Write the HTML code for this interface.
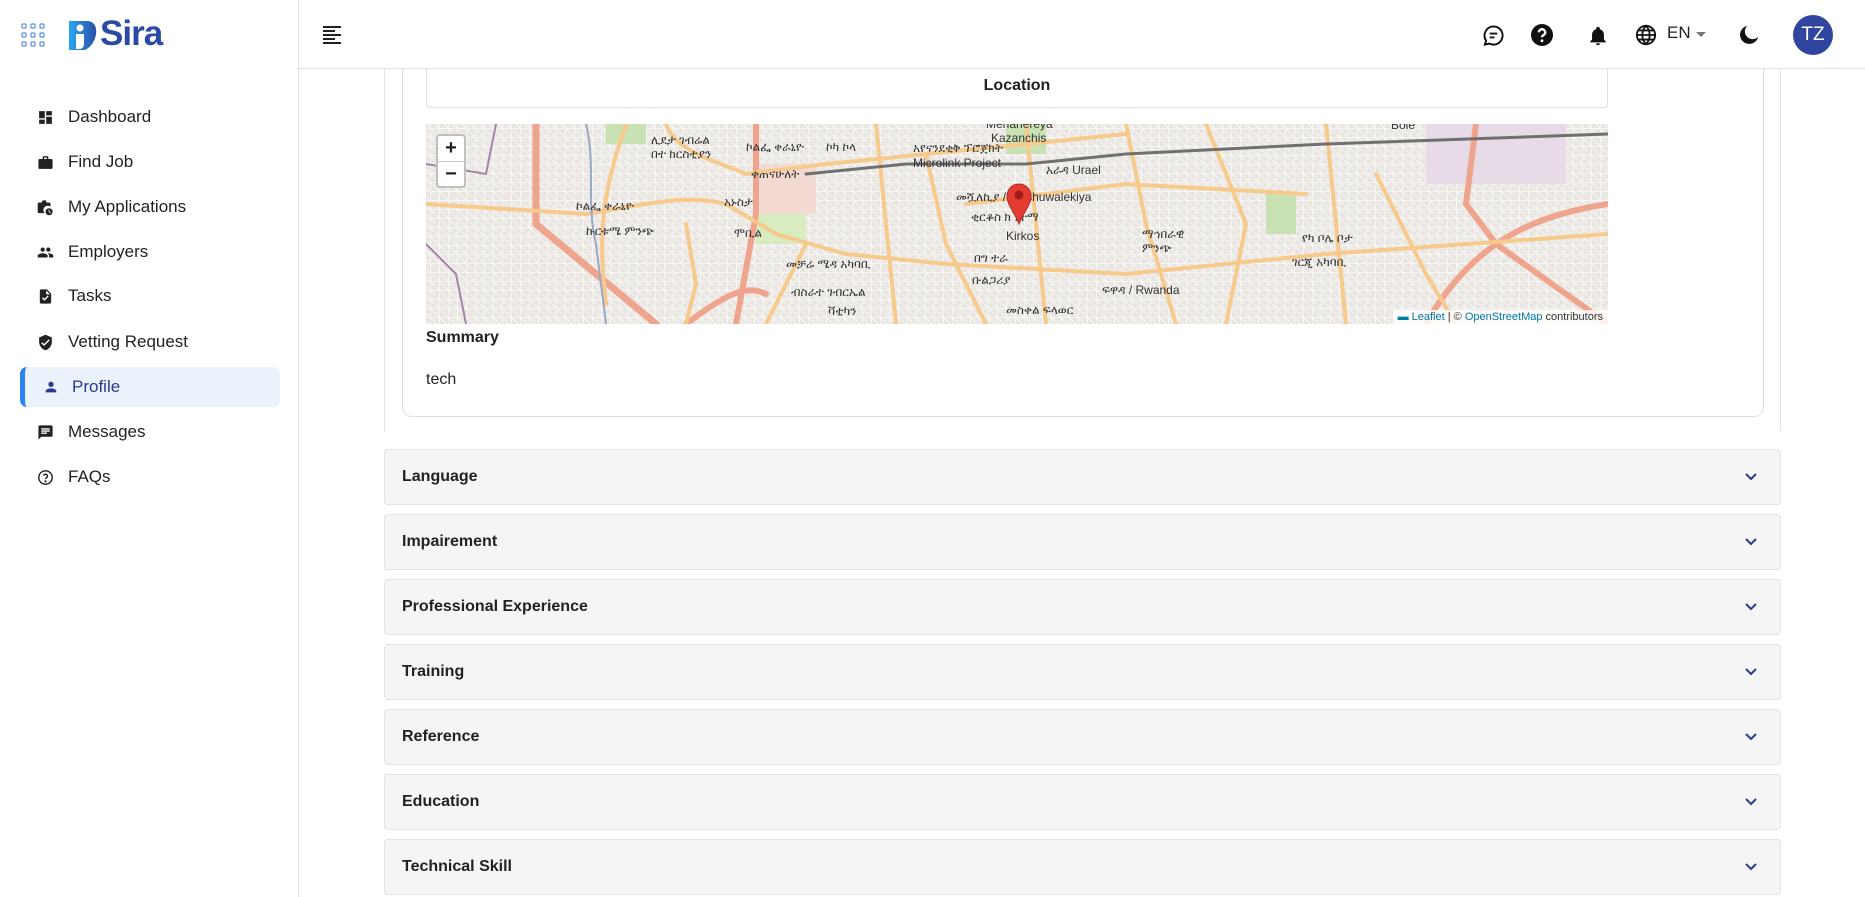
<!DOCTYPE html>
<html><head><meta charset="utf-8">
<style>
*{box-sizing:border-box;margin:0;padding:0}
body{width:1865px;height:897px;overflow:hidden;background:#fff;font-family:"Liberation Sans","Noto Sans CJK SC",sans-serif;color:#222;position:relative}
.side{position:absolute;left:0;top:0;width:299px;height:897px;border-right:1px solid #e0e0e0;background:#fff;z-index:5}
.top{position:absolute;left:299px;top:0;right:0;height:69px;border-bottom:1px solid #e0e0e0;background:#fff;z-index:5}
.item{position:absolute;left:20px;width:260px;height:40px;display:flex;align-items:center;font-size:17px;color:#222}
.item svg{position:absolute;left:17px}
.item span{position:absolute;left:48px}
.item.act{background:#ebf2fc;border-radius:7px;border-left:5px solid #2684f5;color:#2b3a8f}
.item.act svg{left:18px}.item.act span{left:47px}
.acc{position:absolute;left:384px;width:1397px;height:56px;background:#f5f5f5;border:1px solid #e3e3e3;border-radius:4px;font-weight:bold;font-size:16px;display:flex;align-items:center;padding-left:17px}
.acc svg{position:absolute;right:22px;top:22px}
.ic{position:absolute}
</style></head><body>
<div class="side">
  <svg class="ic" style="left:21px;top:23px" width="24" height="24" viewBox="0 0 24 24" fill="none" stroke="#5b8fe0" stroke-width="1.2">
    <rect x="1" y="1" width="4" height="4" rx=".8"/><rect x="10" y="1" width="4" height="4" rx=".8"/><rect x="19" y="1" width="4" height="4" rx=".8"/>
    <rect x="1" y="10" width="4" height="4" rx=".8"/><rect x="10" y="10" width="4" height="4" rx=".8"/><rect x="19" y="10" width="4" height="4" rx=".8"/>
    <rect x="1" y="19" width="4" height="4" rx=".8"/><rect x="10" y="19" width="4" height="4" rx=".8"/><rect x="19" y="19" width="4" height="4" rx=".8"/>
  </svg>
  <svg class="ic" style="left:69px;top:21px" width="28" height="29" viewBox="0 0 28 29">
    <defs><linearGradient id="g" x1="0" x2="1"><stop offset="0" stop-color="#2aa6f0"/><stop offset="1" stop-color="#2a4fa8"/></linearGradient></defs>
    <path d="M0 0H18C25 0 28 6 27 13C26 20 22 26 16 29H0Z" fill="url(#g)"/>
    <circle cx="11" cy="7" r="3.5" fill="#fff"/><path d="M7 13h8v10c0 3-2 5-5 5H7Z" fill="#fff"/>
  </svg>
  <div style="position:absolute;left:100px;top:14px;font-size:35px;font-weight:bold;color:#2b4aa6;letter-spacing:-1px">Sira</div>

  <div class="item" style="top:97px"><svg width="17" height="17" viewBox="0 0 24 24" fill="#222"><path d="M3 13h8V3H3zm0 8h8v-6H3zm10 0h8V11h-8zm0-18v6h8V3z"/></svg><span>Dashboard</span></div>
  <div class="item" style="top:142px"><svg width="17" height="17" viewBox="0 0 24 24" fill="#222"><path d="M10 3h4a2 2 0 0 1 2 2v2h4a2 2 0 0 1 2 2v10a2 2 0 0 1-2 2H4a2 2 0 0 1-2-2V9a2 2 0 0 1 2-2h4V5a2 2 0 0 1 2-2zm0 4h4V5h-4z"/></svg><span>Find Job</span></div>
  <div class="item" style="top:187px"><svg width="17" height="17" viewBox="0 0 24 24" fill="#222"><path d="M9 2h4v3h4a2 2 0 0 1 2 2v4a6 6 0 0 0-8 9H3a2 2 0 0 1-2-2V7a2 2 0 0 1 2-2h4V3zm8 11a5 5 0 1 1 0 10a5 5 0 0 1 0-10zm-.5 2v3.5l2.5 1.5.6-.9-2-1.2V15z"/></svg><span>My Applications</span></div>
  <div class="item" style="top:232px"><svg width="17" height="17" viewBox="0 0 24 24" fill="#222"><path d="M16 11a3 3 0 1 0 0-6 3 3 0 0 0 0 6zm-8 0a3 3 0 1 0 0-6 3 3 0 0 0 0 6zm0 2c-2.3 0-7 1.2-7 3.5V19h14v-2.5C15 14.2 10.3 13 8 13zm8 0c-.3 0-.6 0-1 .1 1.2.8 2 1.9 2 3.4V19h6v-2.5c0-2.3-4.7-3.5-7-3.5z"/></svg><span>Employers</span></div>
  <div class="item" style="top:276px"><svg width="17" height="17" viewBox="0 0 24 24" fill="#222"><path d="M14 2H6a2 2 0 0 0-2 2v16a2 2 0 0 0 2 2h12a2 2 0 0 0 2-2V8zm-3.5 16L7 14.5l1.4-1.4 2.1 2.1 4.6-4.6 1.4 1.4zM13 9V3.5L18.5 9z"/></svg><span>Tasks</span></div>
  <div class="item" style="top:322px"><svg width="17" height="17" viewBox="0 0 24 24" fill="#222"><path d="M12 1 3 5v6c0 5.5 3.8 10.7 9 12 5.2-1.3 9-6.5 9-12V5zm-2 16-4-4 1.4-1.4 2.6 2.6 6.6-6.6L18 9z"/></svg><span>Vetting Request</span></div>
  <div class="item act" style="top:367px"><svg width="16" height="16" viewBox="0 0 24 24" fill="#2b3a8f"><path d="M12 12a4 4 0 1 0 0-8 4 4 0 0 0 0 8zm0 2c-2.7 0-8 1.3-8 4v2h16v-2c0-2.7-5.3-4-8-4z"/></svg><span>Profile</span></div>
  <div class="item" style="top:412px"><svg width="17" height="17" viewBox="0 0 24 24" fill="#222"><path d="M20 2H4a2 2 0 0 0-2 2v18l4-4h14a2 2 0 0 0 2-2V4a2 2 0 0 0-2-2zM6 9h12v2H6zm8 5H6v-2h8zm4-6H6V6h12z"/></svg><span>Messages</span></div>
  <div class="item" style="top:457px"><svg width="17" height="17" viewBox="0 0 24 24" fill="none" stroke="#222" stroke-width="2"><circle cx="12" cy="12" r="9.5"/><path d="M9.2 9.3a2.9 2.9 0 0 1 5.6 1c0 2-2.8 2.3-2.8 4" /><circle cx="12" cy="17.5" r=".6" fill="#222"/></svg><span>FAQs</span></div>
</div>

<div class="top">
  <svg class="ic" style="left:23px;top:25px" width="20" height="20" viewBox="0 0 20 20" fill="#222"><rect x="1" y="1" width="18" height="2"/><rect x="1" y="5" width="12" height="2"/><rect x="1" y="9" width="18" height="2"/><rect x="1" y="13" width="12" height="2"/><rect x="1" y="17" width="18" height="2"/></svg>
  <svg class="ic" style="left:1183px;top:24px" width="23" height="23" viewBox="0 0 24 24" fill="none" stroke="#111" stroke-width="2"><path d="M12 2.5a9.5 9.5 0 0 1 0 19c-1.6 0-3-.4-4.3-1L3 21.5l1.3-4.2A9.5 9.5 0 0 1 12 2.5z"/><path d="M8 10h8M8 14h5"/></svg>
  <svg class="ic" style="left:1231px;top:23px" width="24" height="24" viewBox="0 0 24 24"><circle cx="12" cy="12" r="11" fill="#111"/><path d="M8.8 9.3a3.2 3.2 0 0 1 6.4.3c0 2.4-3.2 2.5-3.2 4.6" stroke="#fff" stroke-width="2.4" fill="none"/><circle cx="12" cy="17.8" r="1.4" fill="#fff"/></svg>
  <svg class="ic" style="left:1288px;top:24px" width="22" height="24" viewBox="0 0 24 24" fill="#111"><path d="M12 22a2.2 2.2 0 0 0 2.2-2h-4.4A2.2 2.2 0 0 0 12 22zm6.5-6V11c0-3.1-1.6-5.6-4.5-6.3V4a2 2 0 0 0-4 0v.7C7.1 5.4 5.5 7.9 5.5 11v5l-2 2v1h17v-1z"/></svg>
  <svg class="ic" style="left:1336px;top:24px" width="22" height="22" viewBox="0 0 24 24" fill="none" stroke="#111" stroke-width="2"><circle cx="12" cy="12" r="10"/><path d="M2 12h20M12 2c-3 3-4 6.5-4 10s1 7 4 10c3-3 4-6.5 4-10s-1-7-4-10zM4 7h16M4 17h16"/></svg>
  <div style="position:absolute;left:1368px;top:23px;font-size:17px;color:#222">EN</div>
  <svg class="ic" style="left:1397px;top:32px" width="10" height="6"><path d="M0 0h10L5 5z" fill="#777"/></svg>
  <svg class="ic" style="left:1439px;top:24px" width="22" height="22" viewBox="0 0 24 24" fill="#111"><path d="M10 2a10 10 0 1 0 12 12A8 8 0 0 1 10 2z"/></svg>
  <div style="position:absolute;left:1494px;top:15px;width:40px;height:40px;border-radius:50%;background:#2f459f;color:#fff;font-size:19px;display:flex;align-items:center;justify-content:center">TZ</div>
</div>

<div style="position:absolute;left:384px;top:69px;width:1397px;height:362px;border-left:1px solid #e3e3e3;border-right:1px solid #e3e3e3"></div>
<div style="position:absolute;left:402px;top:40px;width:1362px;height:377px;border:1px solid #dedede;border-top:none;border-radius:0 0 10px 10px"></div>
<div style="position:absolute;left:426px;top:69px;width:1182px;height:39px;border:1px solid #e0e0e0;border-top:none;border-radius:0 0 4px 4px;text-align:center;font-weight:bold;font-size:16px;line-height:34px">Location</div>

<div style="position:absolute;left:426px;top:124px;width:1182px;height:200px;overflow:hidden;background:#e9e6e2">
<svg width="1182" height="200" viewBox="0 0 1182 200" font-family="Liberation Sans, Noto Sans CJK SC, sans-serif" font-size="12" fill="#333">
  <defs><pattern id="p" width="9" height="9" patternUnits="userSpaceOnUse"><path d="M0 4.5h9M4.5 0v9M0 0l9 9" stroke="#fbfbfb" stroke-width="1" opacity=".8"/></pattern></defs>
  <rect width="1182" height="200" fill="url(#p)"/>
  <rect x="330" y="40" width="60" height="50" fill="#f2d9d2"/>
  <rect x="330" y="90" width="50" height="30" fill="#d8ecc0"/>
  <rect x="180" y="0" width="40" height="20" fill="#c8e2b4"/>
  <rect x="580" y="0" width="40" height="30" fill="#c8e2b4"/>
  <rect x="840" y="70" width="30" height="40" fill="#c8e2b4"/>
  <rect x="1000" y="0" width="140" height="60" fill="#e6dbe6"/>
  <g fill="none" stroke-linecap="round">
  <path d="M110 0V100L230 200" stroke="#efa48e" stroke-width="7"/>
  <path d="M330 0 V90 L310 200" stroke="#efa48e" stroke-width="6"/>
  <path d="M1050 0 L1040 80 L1070 120 L1182 200" stroke="#efa48e" stroke-width="6"/>
  <path d="M1182 80 C1120 90 1050 110 1000 200" stroke="#efa48e" stroke-width="6"/>
  <path d="M260 200 C300 170 320 160 340 170" stroke="#efa48e" stroke-width="6"/>
  <g stroke="#f7c98a" stroke-width="4">
  <path d="M0 80 L160 90 C220 80 260 70 300 80 L350 110 L420 130 L520 140 L700 150 L900 130 L1182 110"/>
  <path d="M200 0 C180 60 170 100 180 180"/>
  <path d="M240 0 C250 30 300 40 320 50 L400 40 L500 30 L600 20 L700 10"/>
  <path d="M450 0 L460 100 L470 200"/>
  <path d="M380 120 L340 200"/>
  <path d="M500 30 L520 120 L560 200"/>
  <path d="M600 0 L620 200"/>
  <path d="M700 0 L720 100 L750 200"/>
  <path d="M780 0 L820 100 L800 200"/>
  <path d="M900 0 L920 200"/>
  <path d="M950 50 L1000 150 L1030 200"/>
  <path d="M260 100 L270 160 L260 200"/>
  <path d="M540 80 L700 60 L880 70"/>
  </g>
  <path d="M380 50 L480 40 L600 40 L700 30 L900 20 L1182 10" stroke="#707070" stroke-width="3"/>
  <path d="M160 0 C170 40 160 80 170 120 L180 200" stroke="#9aa8c8" stroke-width="2"/>
  <path d="M0 40 L60 50 L70 0" stroke="#a484a8" stroke-width="2"/>
  <path d="M0 120 L30 150 L40 200" stroke="#a484a8" stroke-width="2"/>
  </g>
  <text x="225" y="20">ሊደታ ገብሬል</text><text x="225" y="34">በተ ክርስቲያን</text>
  <text x="320" y="27">ኮልፌ ቀራኒዮ</text><text x="400" y="27">ኮካ ኮላ</text>
  <text x="487" y="28">አየናንደቂቅ ፕሮጀክት</text><text x="487" y="43" font-size="12">Microlink Project</text>
  <text x="325" y="54">ቀጠናሁለት</text><text x="150" y="86">ኮልፌ ቀራኒዮ</text>
  <text x="298" y="82">አኑስታ</text><text x="160" y="111">ኩርቱሜ ምንጭ</text>
  <text x="308" y="113">ሞቢል</text><text x="360" y="144">መቻሬ ሜዳ አካባቢ</text>
  <text x="365" y="172">ብስራተ ገብርኤል</text><text x="402" y="191">ቫቲካን</text>
  <text x="548" y="138">በግ ተራ</text><text x="546" y="160">ቡልጋሪያ</text>
  <text x="530" y="77">መሿለኪያ / Meshuwalekiya</text><text x="545" y="97">ቂርቆስ ክ ነተማ</text>
  <text x="580" y="116">Kirkos</text><text x="620" y="50">አራዳ Urael</text>
  <text x="560" y="4">Mehanereya</text><text x="565" y="18">Kazanchis</text>
  <text x="716" y="114">ማኅበራዊ</text><text x="716" y="128">ምንጭ</text>
  <text x="676" y="170">ፍዋዳ / Rwanda</text><text x="580" y="190">መስቀል ፍላወር</text>
  <text x="866" y="142">ገርጂ አካባቢ</text><text x="876" y="118">የካ ቦሌ ቦታ</text>
  <text x="965" y="5">Bole</text>
</svg>
  <div style="position:absolute;left:10px;top:10px;width:30px;height:54px;background:#fff;border:2px solid rgba(0,0,0,.25);border-radius:4px;font-weight:bold;font-size:20px;text-align:center;line-height:25px">+<div style="border-top:1px solid #ccc">−</div></div>
  <svg style="position:absolute;left:580px;top:59px" width="26" height="42" viewBox="0 0 26 42"><path d="M13 41C9 30 1 22 1 13a12 12 0 0 1 24 0c0 9-8 17-12 28z" fill="#e33d33" stroke="#b52a22"/><circle cx="13" cy="12" r="4.5" fill="#a11d16"/></svg>
  <div style="position:absolute;right:0;bottom:0;background:rgba(255,255,255,.8);font-size:11px;padding:1px 5px;color:#333"><span style="color:#0078a8">▬ Leaflet</span> | © <span style="color:#0078a8">OpenStreetMap</span> contributors</div>
</div>

<div style="position:absolute;left:426px;top:329px;font-weight:bold;font-size:16px">Summary</div>
<div style="position:absolute;left:426px;top:371px;font-size:16px">tech</div>

<div class="acc" style="top:449px">Language<svg width="14" height="9" viewBox="0 0 14 9"><path d="M2 2l5 5 5-5" stroke="#2b3a8f" stroke-width="2" fill="none"/></svg></div>
<div class="acc" style="top:514px">Impairement<svg width="14" height="9" viewBox="0 0 14 9"><path d="M2 2l5 5 5-5" stroke="#2b3a8f" stroke-width="2" fill="none"/></svg></div>
<div class="acc" style="top:579px">Professional Experience<svg width="14" height="9" viewBox="0 0 14 9"><path d="M2 2l5 5 5-5" stroke="#2b3a8f" stroke-width="2" fill="none"/></svg></div>
<div class="acc" style="top:644px">Training<svg width="14" height="9" viewBox="0 0 14 9"><path d="M2 2l5 5 5-5" stroke="#2b3a8f" stroke-width="2" fill="none"/></svg></div>
<div class="acc" style="top:709px">Reference<svg width="14" height="9" viewBox="0 0 14 9"><path d="M2 2l5 5 5-5" stroke="#2b3a8f" stroke-width="2" fill="none"/></svg></div>
<div class="acc" style="top:774px">Education<svg width="14" height="9" viewBox="0 0 14 9"><path d="M2 2l5 5 5-5" stroke="#2b3a8f" stroke-width="2" fill="none"/></svg></div>
<div class="acc" style="top:839px">Technical Skill<svg width="14" height="9" viewBox="0 0 14 9"><path d="M2 2l5 5 5-5" stroke="#2b3a8f" stroke-width="2" fill="none"/></svg></div>
</body></html>
